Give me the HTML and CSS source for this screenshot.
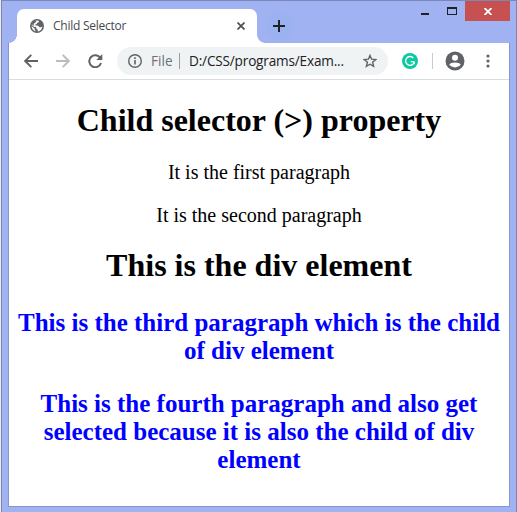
FILE: index.html
```html
<!DOCTYPE html>
<html lang="en">
<head>
<meta charset="utf-8">
<title>Child Selector</title>
<link rel="stylesheet" href="styles.css">
</head>
<body>
<div class="window">
  <header class="titlebar">
    <div class="tab">
      <svg class="globe" width="14" height="14" viewBox="0 0 14 14"><circle cx="7" cy="7" r="7" fill="#5f6368"/><path d="M7.4 1.6 8.9 1.9 8.7 3.2 7 3.9 6.6 5.2 5.2 5.4 5.4 6.6 8.4 6.7 9.4 8.2 11.2 8.3 12.4 7.4C12.2 10 10.2 12.2 7.6 12.4L7.9 10.8 6.5 10 6.2 8.3 3.9 7.8 1.7 5.9C2.3 3.4 4.6 1.5 7.4 1.6Z" fill="#fff"/><path d="M1.8 4.8C2.6 3 4.3 1.7 6.4 1.5L5.9 3.2 4 4.6 3.4 7.3Z" fill="#5f6368"/><path d="M1.6 7 4.6 9.4 4.9 11 6 12.4C3.4 12 1.6 9.7 1.6 7Z" fill="#fff"/></svg>
      <span class="tab-title">Child Selector</span>
      <svg class="tab-close" width="8" height="8" viewBox="0 0 8 8"><path d="M.5.5l7 7M7.5.5l-7 7" stroke="#4b4f54" stroke-width="1.7"/></svg>
    </div>
    <div class="new-tab"><svg width="12" height="12" viewBox="0 0 12 12"><path d="M6 0v12M0 6h12" stroke="#202124" stroke-width="2"/></svg></div>
    <div class="controls">
      <span class="minimize"></span>
      <span class="maximize"></span>
      <span class="close"><svg width="8" height="7" viewBox="0 0 8 7"><path d="M.5 0l7 7M7.5 0l-7 7" stroke="#fff" stroke-width="1.8"/></svg></span>
    </div>
  </header>
  <div class="client">
    <nav class="toolbar">
      <svg class="back" width="14" height="14" viewBox="0 0 14 14"><path d="M14 7H1.5M7.3.8 1.2 7l6.1 6.2" fill="none" stroke="#5f6368" stroke-width="1.9"/></svg>
      <svg class="forward" width="14" height="14" viewBox="0 0 14 14"><path d="M0 7h12.5M6.7.8 12.8 7l-6.1 6.2" fill="none" stroke="#babcbe" stroke-width="1.9"/></svg>
      <svg class="reload" width="15" height="14" viewBox="0 0 15 14"><path d="M12.4 4.1A6 6 0 1 0 13 9" fill="none" stroke="#5f6368" stroke-width="2"/><path d="M14.3 0v6H8.3Z" fill="#5f6368"/></svg>
      <div class="address">
        <svg class="info" width="14" height="14" viewBox="0 0 14 14"><circle cx="7" cy="7" r="6.3" fill="none" stroke="#5f6368" stroke-width="1.4"/><path d="M7 6v4.6M7 3.3v1.6" stroke="#5f6368" stroke-width="1.6"/></svg>
        <span class="scheme">File</span>
        <span class="url">D:/CSS/programs/Exam...</span>
        <svg class="star" width="14" height="14" viewBox="0 0 14 14"><path d="M7 1.4 8.6 5.2l4.2.3-3.2 2.7 1 4.2L7 10.2l-3.6 2.2 1-4.2L1.2 5.5 5.4 5.2Z" fill="none" stroke="#5f6368" stroke-width="1.4"/></svg>
      </div>
      <svg class="grammar" width="16" height="16" viewBox="0 0 16 16"><circle cx="8" cy="8" r="8" fill="#0bc9a2"/><path d="M11.3 5A4.4 4.4 0 1 0 12.3 8.8M8.7 8.7h3.8M12.2 8.7v2.5" fill="none" stroke="#fff" stroke-width="1.3"/></svg>
      <span class="divider"></span>
      <svg class="profile" width="20" height="20" viewBox="0 0 20 20"><circle cx="10" cy="10" r="9.5" fill="#5f6368"/><circle cx="10" cy="6.8" r="3" fill="#fff"/><path d="M4.3 13.6C5.5 10.8 14.5 10.8 15.7 13.6 13.4 17.3 6.6 17.3 4.3 13.6Z" fill="#fff"/></svg>
      <svg class="menu" width="4" height="14" viewBox="0 0 4 14"><g fill="#5f6368"><circle cx="2" cy="2" r="1.6"/><circle cx="2" cy="7" r="1.6"/><circle cx="2" cy="12" r="1.6"/></g></svg>
    </nav>
    <main class="page">
      <h1>Child selector (&gt;) property</h1>
      <p>It is the first paragraph</p>
      <p>It is the second paragraph</p>
      <div class="group">
        <h1 class="second">This is the div element</h1>
        <p>This is the third paragraph which is the child<br>of div element</p>
        <p>This is the fourth paragraph and also get<br>selected because it is also the child of div<br>element</p>
      </div>
    </main>
  </div>
</div>
</body>
</html>
```
FILE: styles.css
```css
* { box-sizing: border-box; }
body { margin: 0; background: #e9e9eb; overflow: hidden; }
.window {
  width: 516px; height: 512px; margin-left: 1px; padding: 0 6px 5px;
  background: #a0b2f2; border: 1px solid #7b87b8; border-bottom: 0;
}
.titlebar { display: flex; height: 42px; margin: 0 -6px; padding-left: 15px; }
.tab {
  position: relative; display: flex; align-items: center;
  width: 240px; height: 34px; margin-top: 8px; padding: 0 12px 0 13px;
  background: #fff; border-radius: 7px 7px 0 0;
}
.tab::before, .tab::after { content: ""; position: absolute; bottom: 0; width: 8px; height: 8px; }
.tab::before { left: -8px; background: radial-gradient(circle at 0 0, transparent 7.5px, #fff 8px); }
.tab::after { right: -8px; background: radial-gradient(circle at 100% 0, transparent 7.5px, #fff 8px); }
.tab-title {
  flex: 1; margin-left: 9px; color: #45494e;
  font: 12px/16px "Open Sans", sans-serif; letter-spacing: -.26px;
}
.tab-close { flex: none; }
.globe { flex: none; }
.new-tab {
  display: grid; place-items: center; width: 28px; height: 28px;
  margin: 11px 0 0 8px; border-radius: 50%; background: #9bb2f1;
}
.controls { display: flex; margin-left: auto; margin-right: 6px; }
.minimize { width: 8px; height: 2px; margin-top: 12px; background: #202124; }
.maximize { width: 10px; height: 8px; margin: 6px 8px 0 18px; border: 1px solid #202124; border-top-width: 2px; }
.close { display: grid; place-items: center; width: 45px; height: 20px; background: #c75050; }
.client { height: 464px; background: #fff; border: solid #8795cf; border-width: 0 1px 1px; }
.toolbar {
  display: flex; align-items: center; height: 37px; padding: 0 12px 0 15px;
  border-bottom: 1px solid #dadce0;
}
.toolbar svg { flex: none; }
.forward { margin-left: 18px; }
.reload { margin-left: 18px; }
.address {
  display: flex; align-items: center; width: 271px; height: 28px;
  margin-left: 14px; padding: 0 11px; background: #f0f3f4; border-radius: 14px;
  font: 13.6px/20px "Open Sans", sans-serif; white-space: nowrap;
}
.scheme { width: 29px; height: 16px; margin-left: 9px; color: #6c7075; line-height: 16px; border-right: 1px solid #9aa0a6; }
.url { width: 164px; margin-left: 9px; color: #202124; letter-spacing: -.18px; }
.star { margin-left: auto; }
.grammar { margin-left: 14px; }
.divider { width: 1px; height: 16px; margin-left: 14px; background: #c8cbcf; }
.profile { margin-left: 12px; }
.menu { margin-left: auto; margin-right: 7px; }
.page { padding-top: 22px; font-family: "Liberation Serif", serif; text-align: center; white-space: nowrap; }
h1 { margin: 0; font-size: 32px; line-height: 37px; }
p { margin: 20px 0 0; font-size: 20px; line-height: 23px; }
h1 + p { margin-top: 22px; }
.second { margin-top: 20px; }
.group > p { margin-top: 25px; color: #00f; font-weight: bold; font-size: 25px; line-height: 28px; }
```
